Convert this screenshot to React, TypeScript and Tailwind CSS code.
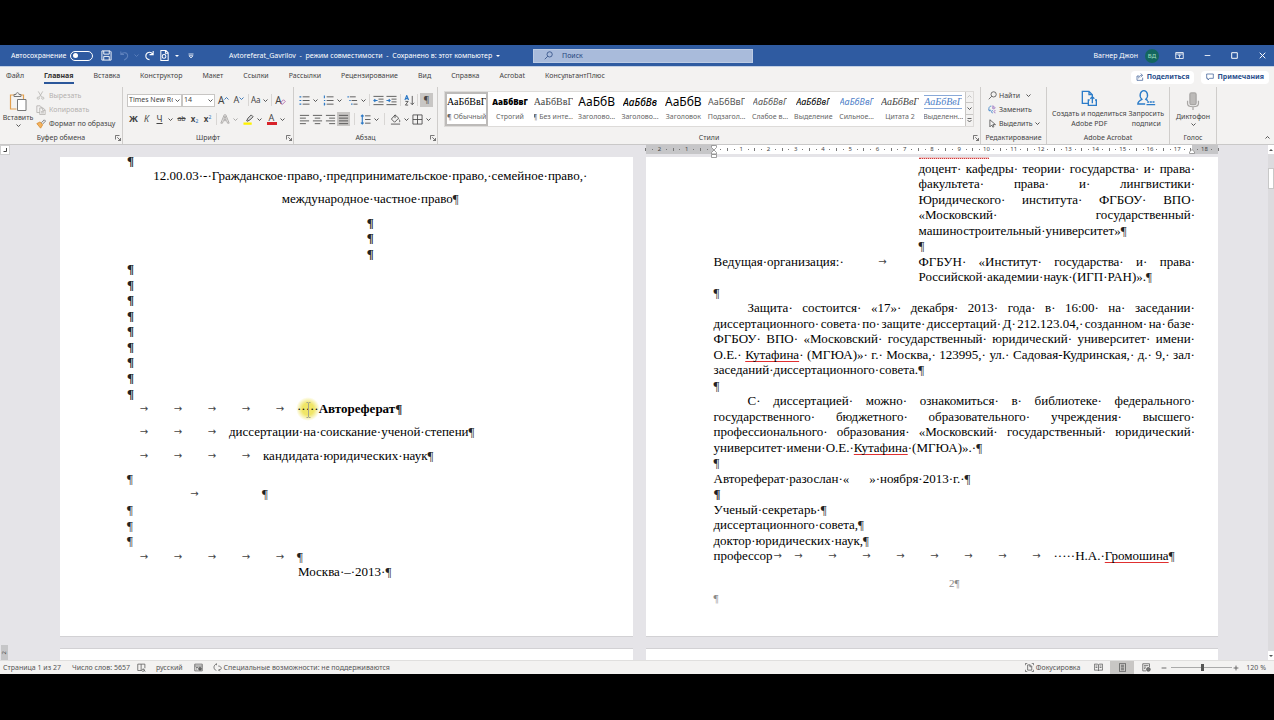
import React from "react";
import type { ReactNode } from "react";

/* ---------- small building blocks ---------- */

function Svg({ className, box = "0 0 24 24", sw = 1.6, children }: { className?: string; box?: string; sw?: number; children: ReactNode }) {
  return (
    <svg className={className} viewBox={box} fill="none" stroke="currentColor" strokeWidth={sw} aria-hidden="true">
      {children}
    </svg>
  );
}

function Caret({ className = "" }: { className?: string }) {
  return (
    <Svg className={"size-[5px] shrink-0 " + className} box="0 0 10 10" sw={1.8}>
      <path d="M1 3l4 4 4-4" />
    </Svg>
  );
}

function Drop({ label }: { label: string }) {
  return (
    <button aria-label={label} className="flex h-[14px] w-[9px] items-center justify-center">
      <Caret />
    </button>
  );
}

function Tool({ label, on, children }: { label: string; on?: boolean; children: ReactNode }) {
  return (
    <button aria-label={label} className={"flex h-[14px] w-[13px] shrink-0 items-center justify-center " + (on ? "bg-[#c8c6c4]" : "")}>
      {children}
    </button>
  );
}

function Sep() {
  return <span className="h-3 w-px shrink-0 bg-[#d8d6d4]" />;
}

function Group({ title, launcher, className, children }: { title: string; launcher?: boolean; className: string; children: ReactNode }) {
  return (
    <section aria-label={title} className={"flex flex-col border-r border-[#cfcdcb] " + className}>
      <div className="flex h-[45px] min-w-0 items-center">{children}</div>
      <div className="relative flex h-3 items-center justify-center text-[#444]">
        {title}
        {launcher && (
          <button aria-label={title + ": параметры"} className="absolute right-[1px]">
            <Svg className="size-[6px]" box="0 0 12 12" sw={1.4}>
              <path d="M1 9V1h8M4.500 4.500L11 11M11 6v5H6" />
            </Svg>
          </button>
        )}
      </div>
    </section>
  );
}

/* ---------- title bar ---------- */

function TitleBar() {
  return (
    <header className="flex h-[21px] shrink-0 items-center bg-[#2f5ba1] text-white">
      <div className="flex w-[229px] items-center pl-[11px]">
        <label className="flex items-center gap-1">
          Автосохранение
          <input type="checkbox" className="peer sr-only" />
          <span className="flex h-[10px] w-[23px] items-center rounded-full border border-white pl-[2px]">
            <span className="size-[5px] rounded-full bg-white" />
          </span>
        </label>
        <button aria-label="Сохранить" className="ml-2">
          <Svg className="size-[11px]" sw={2}>
            <path d="M2 2h18l2 2v18H2zM6 2v7h12V2M6 22v-8h12v8" />
          </Svg>
        </button>
        <button aria-label="Отменить" className="ml-[7px] flex items-center gap-1 text-[#5f82bd]">
          <Svg className="size-[11px]" sw={2.2}>
            <path d="M4 3v7h7M4 10c4-6 15-6 15 3 0 4-3 6-8 9" />
          </Svg>
          <Caret className="size-[4px]" />
        </button>
        <button aria-label="Повторить" className="ml-[5px]">
          <Svg className="size-[11px]" sw={2.4}>
            <path d="M20 2v8h-8M19 9C14 2 4 5 4 13c0 4 3 7 8 8" />
          </Svg>
        </button>
        <button aria-label="Просмотр" className="ml-[4px] flex items-center gap-[5px]">
          <Svg className="size-[11px]" sw={2.2}>
            <path d="M4 1h11l5 5v17H4zM14 1v6h6" />
            <circle cx="11" cy="14" r="4" />
          </Svg>
          <svg className="size-[4px]" viewBox="0 0 8 8" aria-hidden="true">
            <path d="M0 2h8L4 6z" fill="currentColor" />
          </svg>
        </button>
        <button aria-label="Настройка панели" className="ml-[9px]">
          <Svg className="size-[6px]" box="0 0 12 12" sw={1.6}>
            <path d="M1 2h10M2 5.500h8L6 10z" />
          </Svg>
        </button>
      </div>
      <h1 className="flex w-[304px] items-center gap-1 whitespace-nowrap">
        Avtoreferat_Gavrilov&nbsp; -&nbsp; режим совместимости&nbsp; -&nbsp; Сохранено в: этот компьютер
        <svg className="size-[4px]" viewBox="0 0 8 8" aria-hidden="true">
          <path d="M0 2h8L4 6z" fill="currentColor" />
        </svg>
      </h1>
      <label className="flex h-[14px] w-[220px] items-center gap-[9px] border border-[#bccbe4] bg-[#a9bbdb] pl-[10px] text-[#27467d]">
        <Svg className="size-[9px] shrink-0" sw={2}>
          <circle cx="15" cy="9" r="7" />
          <path d="M10 14l-8 8" />
        </Svg>
        <input type="search" aria-label="Поиск" placeholder="Поиск" className="min-w-0 flex-1 bg-transparent outline-none placeholder:text-[#27467d]" />
      </label>
      <div className="ml-auto flex items-center pr-2">
        <button className="flex items-center gap-[7px]">
          Вагнер Джон
          <span className="flex size-[14px] items-center justify-center rounded-full bg-[#13665f] text-[6px] text-[#a5e0c4]">ВД</span>
        </button>
        <button aria-label="Параметры ленты" className="ml-[16px]">
          <Svg className="size-[9px]" sw={2.2}>
            <path d="M2 4h20v16H2zM2 8h20M12 18v-7M9 13l3-3 3 3" />
          </Svg>
        </button>
        <button aria-label="Свернуть" className="ml-[20px]">
          <Svg className="size-[7px]" box="0 0 10 10" sw={1.2}><path d="M1 5h8" /></Svg>
        </button>
        <button aria-label="Развернуть" className="ml-[20px]">
          <Svg className="size-[7px]" box="0 0 10 10" sw={1.4}><path d="M1 1h8v8H1z" /></Svg>
        </button>
        <button aria-label="Закрыть" className="ml-[21px]">
          <Svg className="size-[7px]" box="0 0 10 10" sw={1.4}><path d="M1 1l8 8M9 1l-8 8" /></Svg>
        </button>
      </div>
    </header>
  );
}

/* ---------- ribbon tabs ---------- */

const TABS = ["Файл", "Главная", "Вставка", "Конструктор", "Макет", "Ссылки", "Рассылки", "Рецензирование", "Вид", "Справка", "Acrobat", "КонсультантПлюс"];

function Tabs() {
  return (
    <nav className="flex h-[21px] shrink-0 items-center border-t border-[#c3d0e4] pr-[5px] pl-[6px]">
      <div className="flex gap-[20px]">
        {TABS.map((t) => (
          <button
            key={t}
            className={"h-[14px] border-b-2 leading-3 " + (t === "Главная" ? "border-[#2b579a] font-bold text-[#333]" : "border-transparent")}
          >
            {t}
          </button>
        ))}
      </div>
      <div className="ml-auto flex gap-[7px] font-bold text-[#2b4f8c]">
        <button className="flex h-[13px] items-center gap-[3px] rounded-sm bg-white px-[5px]">
          <Svg className="size-[8px]" sw={2}>
            <path d="M9 9H3v13h17v-8M8 16c0-6 4-9 9-9M14 2l6 5-6 5" />
          </Svg>
          Поделиться
        </button>
        <button className="flex h-[13px] items-center gap-[3px] rounded-sm bg-white px-[5px]">
          <Svg className="size-[8px]" sw={2}>
            <path d="M2 3h20v13H11l-5 5v-5H2z" />
          </Svg>
          Примечания
        </button>
      </div>
    </nav>
  );
}

/* ---------- ribbon groups ---------- */

function ClipboardGroup() {
  return (
    <Group title="Буфер обмена" launcher className="w-[123px] shrink-0">
      <button className="flex w-9 flex-col items-center">
        <Svg className="h-[20px] w-[18px]" box="0 0 36 40" sw={2.4}>
          <path d="M10 6H3v28h12M24 6h5v8" stroke="#e3a04e" />
          <path d="M10 9V5h4c0-5 6-5 6 0h4v4z" fill="#f3f2f1" stroke="#777" strokeWidth="2" />
          <path d="M17 15h17v22H17z" fill="#fff" stroke="#777" strokeWidth="2" />
        </Svg>
        <span className="leading-[11px]">Вставить</span>
        <Caret />
      </button>
      <div className="flex flex-col gap-[2px] leading-3">
        <button className="flex items-center gap-1 text-[#b3b1af]">
          <Svg className="size-[9px]" sw={2}>
            <path d="M6 1l9 15M18 1L9 16" />
            <circle cx="6" cy="19" r="3" />
            <circle cx="18" cy="19" r="3" />
          </Svg>
          Вырезать
        </button>
        <button className="flex items-center gap-[3px] text-[#b3b1af]">
          <Svg className="size-[10px]" sw={2}>
            <path d="M9 18H2V2h8l3 3v3M9 7h8l5 5v11H9zM16 7v6h6M12 16h7M12 19h7" />
          </Svg>
          Копировать
        </button>
        <button className="flex items-center gap-[3px]">
          <Svg className="size-[10px]" sw={2}>
            <path d="M2 11l8-4 6 7-5 8z" fill="#f2b25f" stroke="#d98e32" />
            <path d="M13 9l7-7 3 3-7 7" stroke="#666" />
          </Svg>
          Формат по образцу
        </button>
      </div>
    </Group>
  );
}

function FontGroup() {
  return (
    <Group title="Шрифт" launcher className="w-[171px] shrink-0">
      <div className="flex w-full flex-col gap-[5px] pr-[6px] pl-1">
        <div className="flex items-center justify-between">
          <div className="flex">
            <label className="relative flex w-[55px] items-center">
              <select aria-label="Шрифт" className="h-[13px] w-full appearance-none border border-[#c8c6c4] bg-white pr-2 pl-[1px] leading-[10px]">
                <option>Times New Roman</option>
              </select>
              <Caret className="pointer-events-none absolute right-[2px] size-[4px]" />
            </label>
            <label className="relative flex w-[33px] items-center">
              <select aria-label="Размер шрифта" className="h-[13px] w-full appearance-none border border-[#c8c6c4] bg-white pl-[1px] leading-[10px]">
                <option>14</option>
              </select>
              <Caret className="pointer-events-none absolute right-[2px] size-[4px]" />
            </label>
          </div>
          <Tool label="Увеличить размер"><span className="text-[10px]">A</span><Caret className="mb-1 size-[3px] rotate-180 text-[#2b6cb0]" /></Tool>
          <Tool label="Уменьшить размер"><span className="text-[9px]">A</span><Caret className="mb-1 size-[3px] text-[#2b6cb0]" /></Tool>
          <Sep />
          <button className="flex items-center gap-[3px] text-[8px]">Aa<Caret className="size-[4px]" /></button>
          <Sep />
          <Tool label="Очистить формат">
            <span className="text-[10px]">A</span>
            <Svg className="-ml-[2px] mt-1 size-[6px] text-[#a452a0]" sw={3}><path d="M3 14L14 3l7 7-11 11H7z" /></Svg>
          </Tool>
        </div>
        <div className="flex items-center justify-between">
          <div className="flex items-center">
            <Tool label="Полужирный"><b className="text-[9px]">Ж</b></Tool>
            <Tool label="Курсив"><i className="text-[9px]">К</i></Tool>
            <Tool label="Подчеркнутый"><u className="text-[9px]">Ч</u></Tool>
            <Drop label="Вид подчеркивания" />
            <Tool label="Зачеркнутый"><s>ab</s></Tool>
            <Tool label="Подстрочный"><b className="text-[8px]">x</b><span className="mt-1 text-[5px] text-[#2b6cb0]">2</span></Tool>
            <Tool label="Надстрочный"><b className="text-[8px]">x</b><span className="mb-1 text-[5px] text-[#2b6cb0]">2</span></Tool>
          </div>
          <Sep />
          <div className="flex items-center text-[#a3a1a0]">
            <Tool label="Текстовые эффекты">
              <Svg className="size-[10px]" sw={2}><path d="M2 22L10 2h4l8 20h-4l-2-6H8l-2 6zM9 13h6l-3-8z" /></Svg>
            </Tool>
            <Drop label="Эффекты" />
          </div>
          <div className="flex items-center">
            <Tool label="Цвет выделения">
              <Svg className="size-[11px]" sw={2}>
                <path d="M1 21h18" stroke="#fff200" strokeWidth="5" />
                <path d="M8 15l3-6 7-7 4 4-7 7-6 3z" fill="#ddd" />
              </Svg>
            </Tool>
            <Drop label="Цвета выделения" />
          </div>
          <div className="flex items-center">
            <Tool label="Цвет текста">
              <span className="flex w-[10px] flex-col items-center border-b-[3px] border-[#d8232a] text-[9px] leading-[8px]">A</span>
            </Tool>
            <Drop label="Цвета текста" />
          </div>
        </div>
      </div>
    </Group>
  );
}

function Lines({ d, blue }: { d: string; blue?: string }) {
  return (
    <Svg className="size-[11px]" sw={1.8}>
      {blue && <path d={blue} stroke="#2b78c5" strokeWidth="2.400" />}
      <path d={d} />
    </Svg>
  );
}

function ParagraphGroup() {
  return (
    <Group title="Абзац" launcher className="w-[144px] shrink-0">
      <div className="flex w-full flex-col gap-[5px] pr-1 pl-1">
        <div className="flex items-center justify-between">
          <div className="flex"><Tool label="Маркеры"><Lines d="M8 4h15M8 12h15M8 20h15" blue="M1 4h4M1 12h4M1 20h4" /></Tool><Drop label="Виды маркеров" /></div>
          <div className="flex"><Tool label="Нумерация"><Lines d="M8 4h15M8 12h15M8 20h15" blue="M3 1v6M2 12h3M2 20h3M3 17v6" /></Tool><Drop label="Виды нумерации" /></div>
          <div className="flex"><Tool label="Многоуровневый список"><Lines d="M6 4h13M10 12h12M14 20h9" blue="M1 4h3M5 12h3M9 20h3" /></Tool><Drop label="Виды списков" /></div>
          <Sep />
          <div className="flex">
            <Tool label="Уменьшить отступ"><Lines d="M1 3h22M12 9h11M12 15h11M1 21h22" blue="M10 12H2M5 9l-3 3 3 3" /></Tool>
            <Tool label="Увеличить отступ"><Lines d="M1 3h22M12 9h11M12 15h11M1 21h22" blue="M1 12h8M6 9l3 3-3 3" /></Tool>
          </div>
          <Sep />
          <Tool label="Сортировка"><Lines d="M3 14h6L3 22h6M18 2v19M14 17l4 4 4-4" blue="M2 11L6 1l4 10M3 8h6" /></Tool>
          <Sep />
          <Tool label="Непечатаемые знаки" on><span className="text-[9px]">¶</span></Tool>
        </div>
        <div className="flex items-center justify-between">
          <div className="flex">
            <Tool label="По левому краю"><Lines d="M2 3h20M2 9h13M2 15h20M2 21h13" /></Tool>
            <Tool label="По центру"><Lines d="M2 3h20M6 9h12M2 15h20M6 21h12" /></Tool>
            <Tool label="По правому краю"><Lines d="M2 3h20M9 9h13M2 15h20M9 21h13" /></Tool>
            <Tool label="По ширине" on><Lines d="M2 3h20M2 9h20M2 15h20M2 21h20" /></Tool>
          </div>
          <Sep />
          <div className="flex"><Tool label="Интервал"><Lines d="M11 4h12M11 12h12M11 20h12" blue="M5 2v20M2 5l3-3 3 3M2 19l3 3 3-3" /></Tool><Drop label="Интервалы" /></div>
          <Sep />
          <div className="flex">
            <Tool label="Заливка"><Lines d="M11 2L3 11l7 7 9-9zM11 2v7M20 12c3 4 0 6 0 6M2 22h20" /></Tool><Drop label="Цвета заливки" />
            <Tool label="Границы"><Lines d="M2 2h20v20H2zM12 2v20M2 12h20" /></Tool><Drop label="Виды границ" />
          </div>
        </div>
      </div>
    </Group>
  );
}

const SERIF = "font-['Liberation_Serif',serif] text-[10px]";
const STYLES: { name: string; sample: string; cls: string }[] = [
  { name: "¶ Обычный", sample: "АаБбВвГ", cls: SERIF + " text-black" },
  { name: "Строгий", sample: "АаБбВвГ", cls: "text-[8px] font-black text-black" },
  { name: "¶ Без инте...", sample: "АаБбВвГ", cls: SERIF },
  { name: "Заголово...", sample: "АаБбВ", cls: "text-[12px] text-black" },
  { name: "Заголово...", sample: "АаБбВв", cls: "text-[10px] italic text-black font-medium" },
  { name: "Заголовок", sample: "АаБбВ", cls: "text-[12px] text-black" },
  { name: "Подзагол...", sample: "АаБбВвГ", cls: "text-[9px] text-[#555]" },
  { name: "Слабое в...", sample: "АаБбВвГ", cls: "text-[9px] italic text-[#555]" },
  { name: "Выделение", sample: "АаБбВвГ", cls: "text-[9px] italic text-black" },
  { name: "Сильное...", sample: "АаБбВвГ", cls: "text-[9px] italic text-[#4f7fc8]" },
  { name: "Цитата 2", sample: "АаБбВвГ", cls: SERIF + " italic" },
  { name: "Выделенн...", sample: "АаБбВвГ", cls: SERIF + " italic text-[#4f7fc8] border-y border-[#8aa9d8]" },
];

function StylesGroup() {
  return (
    <Group title="Стили" launcher className="min-w-0 flex-1">
      <div className="mx-[6px] mb-[2px] flex h-9 min-w-0 flex-1 border border-[#dddbd9]">
        <div className="grid min-w-0 flex-1 grid-cols-12 bg-white">
          {STYLES.map((s, i) => (
            <button
              key={i}
              className={"flex min-w-0 flex-col items-center justify-center gap-[2px] overflow-hidden whitespace-nowrap border-2 " + (i === 0 ? "border-[#bdbbb9]" : "border-transparent")}
            >
              <span className={"flex h-[14px] max-w-full items-center overflow-hidden " + s.cls}>{s.sample}</span>
              <span className="leading-[11px] text-[#666]">{s.name}</span>
            </button>
          ))}
        </div>
        <div className="flex w-2 flex-col divide-y divide-[#c8c6c4] border-l border-[#c8c6c4]">
          <button aria-label="Предыдущие стили" className="flex flex-1 items-center justify-center text-[#bbb]"><Caret className="size-[4px] rotate-180" /></button>
          <button aria-label="Следующие стили" className="flex flex-1 items-center justify-center"><Caret className="size-[4px]" /></button>
          <button aria-label="Все стили" className="flex flex-1 items-center justify-center">
            <Svg className="size-[5px]" box="0 0 10 10" sw={1.6}><path d="M1 1h8M1 4l4 4 4-4" /></Svg>
          </button>
        </div>
      </div>
    </Group>
  );
}

function EditGroup() {
  return (
    <Group title="Редактирование" className="w-[66px] shrink-0">
      <div className="flex flex-col gap-[2px] pl-[7px] leading-3">
        <button className="flex items-center gap-[2px]">
          <Svg className="size-[9px]" sw={2}><circle cx="15" cy="9" r="7" /><path d="M10 14l-8 8" /></Svg>
          Найти<Caret className="ml-1" />
        </button>
        <button className="flex items-center gap-[2px]">
          <Svg className="size-[9px]" sw={2}>
            <path d="M13 1v9M13 6c3-3 7 0 5 3-1 2-4 2-5 0M20 15c-5-1-6 6 0 6" stroke="#8a5cb5" />
            <path d="M9 3C2 3 1 10 4 15M1 12l3 4 4-3M13 15c-5-1-6 6 0 6" stroke="#2b78c5" />
          </Svg>
          Заменить
        </button>
        <button className="flex items-center gap-[2px]">
          <Svg className="size-[9px]" sw={2}><path d="M5 2v19l5-5 3 6 3-2-3-5h7z" /></Svg>
          Выделить<Caret />
        </button>
      </div>
    </Group>
  );
}

function AcrobatGroup() {
  return (
    <Group title="Adobe Acrobat" className="w-[123px] shrink-0">
      <div className="flex w-full justify-between whitespace-nowrap px-[5px] text-center leading-[10px]">
        <button className="flex flex-col items-center gap-[3px]">
          <Svg className="size-[16px] text-[#2b7cc9]" sw={2}>
            <path d="M10 20H2V2h10l5 5v3M12 2v5h5M13 15h-2v8h12v-8h-2M17 20v-9M14 13l3-3 3 3" />
          </Svg>
          <span>Создать и поделиться<br />Adobe PDF</span>
        </button>
        <button className="flex flex-col items-center gap-[3px]">
          <Svg className="h-[16px] w-[19px] text-[#2b7cc9]" box="0 0 28 24" sw={2}>
            <path d="M12 21H1c0-4 2-5 6-7-5-5-2-13 3-13s8 8 3 13l3 2M14 22h13" />
            <path d="M15 18h11" strokeWidth="2.500" strokeDasharray="3 1" />
          </Svg>
          <span>Запросить<br />подписи</span>
        </button>
      </div>
    </Group>
  );
}

function VoiceGroup() {
  return (
    <Group title="Голос" className="w-[47px] shrink-0">
      <button className="flex w-full flex-col items-center">
        <Svg className="h-[19px] w-[14px] text-[#a8a6a4]" box="0 0 18 24" sw={1.6}>
          <rect x="5" y="1" width="8" height="15" rx="2" fill="#bcbab8" />
          <path d="M2 11v4c0 5 14 5 14 0v-4M9 19v4" />
        </Svg>
        <span className="leading-[11px]">Диктофон</span>
        <Caret />
      </button>
    </Group>
  );
}

/* ---------- document ---------- */

const HALF = "grow-[3]";
const FULL = "grow-[2]";

function Row({ tall, center, children }: { tall?: boolean; center?: boolean; children: ReactNode }) {
  return (
    <div className={"flex min-h-0 shrink basis-0 items-end whitespace-nowrap " + (tall ? HALF : FULL) + (center ? " justify-center" : "")}>
      {children}
    </div>
  );
}

function Mark({ className = "" }: { className?: string }) {
  return <span className={"text-[#222] " + className}>¶</span>;
}

function Tab({ className = "w-[34px]" }: { className?: string }) {
  return <span className={"shrink-0 text-center font-['DejaVu_Sans',sans-serif] text-[10px] text-[#444] " + className}>→</span>;
}

function TabRun({ n }: { n: number }) {
  return <>{Array.from({ length: n }, (_, i) => <Tab key={i} />)}</>;
}

function Spell({ children }: { children: ReactNode }) {
  return <span className="underline decoration-[#e03030] decoration-1 underline-offset-2 [text-decoration-skip-ink:none]">{children}</span>;
}

function Justified({ text, className = "" }: { text: string; className?: string }) {
  return (
    <div className={"flex min-h-0 shrink basis-0 items-end justify-between whitespace-nowrap " + FULL + " " + className}>
      {text.split(" ").map((w, i) => (
        <span key={i}>{w === "Кутафина" ? <Spell>{w}</Spell> : w}·</span>
      ))}
    </div>
  );
}

function LeftPage() {
  return (
    <article className="min-w-0 overflow-hidden border-b border-[#d2d1d4] bg-white pr-[19px] pl-[67px]">
      <div className="-mt-[5px] flex h-[427px] flex-col">
        <Row><Mark className="font-bold" /></Row>
        <Row center>12.00.03·-·Гражданское·право,·предпринимательское·право,·семейное·право,·</Row>
        <Row tall center>международное·частное·право<Mark /></Row>
        <Row tall center><Mark className="font-bold" /></Row>
        <Row center><Mark className="font-bold" /></Row>
        <Row center><Mark className="font-bold" /></Row>
        {Array.from({ length: 9 }, (_, i) => <Row key={i}><Mark className="font-bold" /></Row>)}
        <Row>
          <TabRun n={5} />
          <b className="relative">
            <span className="absolute -top-1 -left-[1px] size-6 rounded-full bg-[radial-gradient(circle,#f0e668_35%,transparent_70%)]" />
            <span className="relative">
              <span className="font-normal">·····</span>Автореферат
            </span>
            <Svg className="absolute top-[1px] left-[9px] h-[16px] w-[5px] text-[#a5a58c]" box="0 0 10 32" sw={2}>
              <path d="M1 1h3l1 1 1-1h3M5 2v28M1 31h3l1-1 1 1h3" />
            </Svg>
            <Mark />
          </b>
        </Row>
        <Row tall><TabRun n={3} />диссертации·на·соискание·ученой·степени<Mark /></Row>
        <Row tall><TabRun n={4} />кандидата·юридических·наук<Mark /></Row>
        <Row tall><Mark /></Row>
        <Row><Tab className="w-[135px]" /><Mark /></Row>
        <Row><Mark /></Row>
        <Row><Mark /></Row>
        <Row><Mark /></Row>
        <Row><TabRun n={5} /><Mark /></Row>
        <Row><span className="w-[171px]" />Москва·–·2013·<Mark /></Row>
      </div>
    </article>
  );
}

function RightPage() {
  const side = "pl-[205px]";
  return (
    <article className="min-w-0 overflow-hidden border-b border-[#d2d1d4] bg-white pr-[23px] pl-[68px]">
      <div className="flex h-[3px] pl-[205px]"><span className="h-[2px] w-[70px] border-b border-dotted border-[#d23b3b] bg-[#f0c4c4]" /></div>
      <div className="flex h-[403px] flex-col">
        <Justified className={side} text="доцент кафедры теории государства и права" />
        <Justified className={side} text="факультета права и лингвистики" />
        <Justified className={side} text="Юридического института ФГБОУ ВПО" />
        <Justified className={side} text="«Московский государственный" />
        <Row><span className="w-[205px]" />машиностроительный·университет»<Mark /></Row>
        <Row><span className="w-[205px]" /><Mark /></Row>
        <div className={"flex min-h-0 shrink basis-0 items-end whitespace-nowrap " + FULL}>
          <span className="flex w-[205px] shrink-0 items-end justify-between">Ведущая·организация:·<Tab className="w-[72px]" /></span>
          <span className="flex flex-1 justify-between"><span>ФГБУН·</span><span>«Институт·</span><span>государства·</span><span>и·</span><span>права·</span></span>
        </div>
        <Row><span className="w-[205px]" />Российской·академии·наук·(ИГП·РАН)».<Mark /></Row>
        <Row><Mark /></Row>
        <Justified className="pl-[34px]" text="Защита состоится «17» декабря 2013 года в 16:00 на заседании" />
        <Justified text="диссертационного совета по защите диссертаций Д 212.123.04, созданном на базе" />
        <Justified text="ФГБОУ ВПО «Московский государственный юридический университет имени" />
        <Justified text="О.Е. Кутафина (МГЮА)» г. Москва, 123995, ул. Садовая-Кудринская, д. 9, зал" />
        <Row>заседаний·диссертационного·совета.<Mark /></Row>
        <Row><Mark /></Row>
        <Justified className="pl-[34px]" text="С диссертацией можно ознакомиться в библиотеке федерального" />
        <Justified text="государственного бюджетного образовательного учреждения высшего" />
        <Justified text="профессионального образования «Московский государственный юридический" />
        <Row>университет·имени·О.Е.·<Spell>Кутафина</Spell>·(МГЮА)».·<Mark /></Row>
        <Row><Mark /></Row>
        <Row>Автореферат·разослан·«<span className="w-5" />»·ноября·2013·г.·<Mark /></Row>
        <Row><Mark className="font-bold" /></Row>
        <Row>Ученый·секретарь·<Mark /></Row>
        <Row>диссертационного·совета,<Mark /></Row>
        <Row>доктор·юридических·наук,<Mark /></Row>
        <Row><span className="flex w-[68px] items-end justify-between">профессор<Tab className="w-2" /></span><TabRun n={8} />·····Н.А.·<Spell>Громошина</Spell><Mark /></Row>
      </div>
      <div className="mt-[14px] text-center text-[11px] leading-3 text-[#8a8a8a]">2¶</div>
      <div className="mt-[3px] text-[11px] leading-3 text-[#8a8a8a]">¶</div>
    </article>
  );
}

function Ruler() {
  // One slot per quarter of a centimetre; a whole A4 width is 21 cm.
  return (
    <div className="relative flex h-[9px] min-w-0 items-center bg-[linear-gradient(to_right,#c6c6c8_68px,#fff_68px,#fff_546px,#c6c6c8_546px)] text-[6px] leading-[9px] text-[#444]">
      <div className="-mx-[3px] flex flex-1">
        {Array.from({ length: 85 }, (_, i) => {
          const q = i - 10;
          const n = Math.abs(q / 4);
          return (
            <span key={i} className="flex h-[9px] w-0 flex-1 items-center justify-center">
              {q === 0 ? null : q % 4 === 0 ? n : q % 2 === 0 ? <i className="h-[3px] w-px bg-[#777]" /> : <i className="size-px bg-[#777]" />}
            </span>
          );
        })}
      </div>
      <svg className="absolute top-0 left-[65px] h-[13px] w-[6px]" viewBox="0 0 6 13" aria-hidden="true">
        <path d="M.5.5h5v2L3 5 .5 2.500zM.5 9V7.500L3 5l2.500 2.500V9zM.5 9.500h5v3h-5z" fill="#fff" stroke="#888" strokeWidth=".8" />
      </svg>
      <svg className="absolute top-[4px] left-[543px] h-[5px] w-[6px]" viewBox="0 0 6 5" aria-hidden="true">
        <path d="M.5 4.500V3L3 .5 5.500 3v1.500z" fill="#fff" stroke="#888" strokeWidth=".8" />
      </svg>
    </div>
  );
}

const SPREAD = "grid w-full max-w-[1158px] grid-cols-2 gap-[13px]";

function Workspace() {
  return (
    <main className="flex min-h-0 flex-1 overflow-hidden border-t border-[#c9c8c8] bg-[#e5e4e8]">
      <div className="flex w-[10px] shrink-0 flex-col justify-between">
        <button aria-label="Тип табуляции" className="flex size-[10px] items-center justify-center border border-[#d0d0d0] bg-white">
          <Svg className="size-[4px]" box="0 0 8 8" sw={2}><path d="M7 0v7H1" /></Svg>
        </button>
        <span className="ml-[1px] flex h-[15px] w-[7px] items-start justify-center bg-[#c6c6c8] text-[6px] leading-[7px] [writing-mode:sideways-lr]">2</span>
      </div>
      <div className="flex min-w-0 flex-1 flex-col items-center">
        <div className={SPREAD}>
          <span />
          <Ruler />
        </div>
        <div className={SPREAD + " mt-[3px] min-h-[480px] font-['Liberation_Serif',serif] text-[13px] leading-[15px] text-black"}>
          <LeftPage />
          <RightPage />
        </div>
        <div className={SPREAD + " mt-[11px] flex-1"}>
          <div className="border-t border-[#d2d1d4] bg-white" />
          <div className="border-t border-[#d2d1d4] bg-white" />
        </div>
      </div>
      <div className="flex w-[6px] shrink-0 flex-col bg-[#dcdbde]">
        <button aria-label="Вверх" className="flex h-[9px] items-center justify-center bg-white">
          <svg className="size-[4px]" viewBox="0 0 8 8" aria-hidden="true"><path d="M0 6h8L4 2z" fill="#555" /></svg>
        </button>
        <span className="mt-[14px] h-[21px] border border-[#c8c8c8] bg-white" />
        <button aria-label="Вниз" className="mt-auto flex h-[9px] items-center justify-center bg-white">
          <svg className="size-[4px]" viewBox="0 0 8 8" aria-hidden="true"><path d="M0 2h8L4 6z" fill="#555" /></svg>
        </button>
      </div>
    </main>
  );
}

function StatusBar() {
  return (
    <footer className="flex h-[14px] shrink-0 items-center border-t border-[#e0dfde] bg-[#f3f2f1] pr-2 pl-[3px] text-[#555]">
      <button>Страница 1 из 27</button>
      <button className="ml-[11px]">Число слов: 5657</button>
      <button aria-label="Правописание" className="ml-[7px]">
        <Svg className="size-[9px]" sw={2}><path d="M2 3h9v17H2zM11 3h10v11M12 20c2-5 8-5 8-1s-6 4-8 1M17 17l5 6" /></Svg>
      </button>
      <button className="ml-[10px]">русский</button>
      <button aria-label="Макросы" className="ml-[11px]">
        <Svg className="size-[9px]" sw={2}><path d="M2 3h20v18H2zM2 8h20M5 12h6M5 16h4" /><circle cx="16" cy="15" r="4" fill="#666" /></Svg>
      </button>
      <button className="ml-[10px] flex items-center gap-[2px]">
        <Svg className="size-[9px]" sw={2}><path d="M9 3C1 5 0 17 9 20M9 1v5M14 8c5 0 8 3 8 6s-3 5-7 5M18 16l-3 3 3 3" /></Svg>
        Специальные возможности: не поддерживаются
      </button>
      <div className="ml-auto flex items-center">
        <button className="flex items-center gap-[2px]">
          <Svg className="size-[9px]" sw={2}><path d="M1 6V1h5M18 1h5v5M1 18v5h5M18 23h5v-5M7 5h7l4 4v10H7zM13 5v5h5" /></Svg>
          Фокусировка
        </button>
        <button aria-label="Режим чтения" className="ml-[6px] flex h-[13px] w-6 items-center justify-center">
          <Svg className="size-[9px]" sw={2}><path d="M12 5v16M1 3h9l2 2 2-2h9v16h-9l-2 2-2-2H1zM4 8h5M4 12h5M15 8h5M15 12h5" /></Svg>
        </button>
        <button aria-label="Разметка страницы" className="flex h-[13px] w-6 items-center justify-center bg-[#c8c6c4]">
          <Svg className="size-[9px]" sw={2}><path d="M4 1h16v22H4zM8 6h8M8 10h8M8 14h8M8 18h8" /></Svg>
        </button>
        <button aria-label="Веб-документ" className="flex h-[13px] w-6 items-center justify-center">
          <Svg className="size-[9px]" sw={2}><path d="M11 21H2V2h18v9M5 7h12M5 11h6M5 15h4" /><circle cx="17" cy="17" r="5" fill="#777" /></Svg>
        </button>
        <button aria-label="Уменьшить" className="ml-[3px]"><Svg className="size-[6px]" box="0 0 10 10" sw={1.4}><path d="M1 5h8" /></Svg></button>
        <input
          type="range"
          aria-label="Масштаб"
          min={10}
          max={230}
          defaultValue={123}
          className="mr-[1px] ml-1 h-[10px] w-[61px] appearance-none bg-[linear-gradient(#aaa,#aaa)] bg-[length:100%_1px] bg-center bg-no-repeat [&::-webkit-slider-thumb]:h-[7px] [&::-webkit-slider-thumb]:w-[3px] [&::-webkit-slider-thumb]:appearance-none [&::-webkit-slider-thumb]:bg-[#555]"
        />
        <button aria-label="Увеличить"><Svg className="size-[6px]" box="0 0 10 10" sw={1.4}><path d="M1 5h8M5 1v8" /></Svg></button>
        <button className="ml-[7px]">120 %</button>
      </div>
    </footer>
  );
}

export default function App() {
  return (
    <div className="flex h-screen min-h-[560px] flex-col bg-black pt-[45px] pb-[46px] font-['Noto_Sans',sans-serif] text-[7px] leading-[10px] text-[#444]">
      <div className="flex min-h-0 flex-1 flex-col overflow-hidden bg-[#f3f2f1]">
        <TitleBar />
        <Tabs />
        <div className="flex h-[57px] shrink-0">
          <ClipboardGroup />
          <FontGroup />
          <ParagraphGroup />
          <StylesGroup />
          <EditGroup />
          <AcrobatGroup />
          <VoiceGroup />
          <div className="flex w-[57px] shrink-0 items-end justify-end p-1">
            <button aria-label="Свернуть ленту"><Caret className="rotate-180" /></button>
          </div>
        </div>
        <Workspace />
        <StatusBar />
      </div>
    </div>
  );
}
